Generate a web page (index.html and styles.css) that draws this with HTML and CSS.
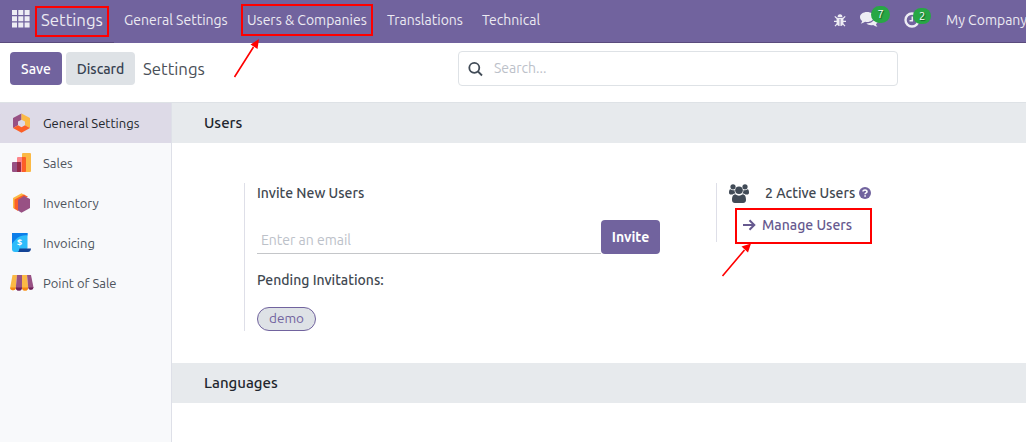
FILE: index.html
```html
<!DOCTYPE html>
<html lang="en">
<head>
<meta charset="utf-8">
<title>Settings</title>
<link rel="stylesheet" href="styles.css">
</head>
<body>
<header class="navbar">
  <svg class="apps" width="18" height="18" viewBox="0 0 18 18"><path d="M0 0h5v5H0zM6.300 0h5v5h-5zM12.600 0h5v5h-5zM0 6.200h5v5H0zM6.300 6.200h5v5h-5zM12.600 6.200h5v5h-5zM0 12.400h5v5H0zM6.300 12.400h5v5h-5zM12.600 12.400h5v5h-5z"/></svg>
  <span class="brand">Settings</span>
  <nav class="menu">
    <a class="m-general">General Settings</a>
    <a class="m-users">Users &amp; Companies</a>
    <a class="m-trans">Translations</a>
    <a class="m-tech">Technical</a>
  </nav>
  <div class="systray">
    <svg class="bug" width="12" height="13" viewBox="0 0 12 13"><path d="M3.600 2.900a2.400 2.600 0 0 1 4.800 0z"/><path d="M2.600 3.700h6.800v5c0 2.200-1.500 3.400-3.400 3.400S2.600 10.900 2.600 8.700z"/><path class="legs" d="M.8 2.300 3 4.500M11.200 2.300 9 4.500M0 7.300h3M12 7.300H9M1 12.200l2.300-2.500M11 12.200 8.700 9.700"/><path class="seam" d="M6 5v7"/></svg>
    <span class="tray-item chat"><svg width="18" height="16" viewBox="0 0 18 16"><path d="M7 0c4 0 7 2.200 7 5s-3 5-7 5c-.7 0-1.300 0-1.900-.2C4 10.700 2.500 11.300.8 11.400c.8-.8 1.300-1.600 1.400-2.500C.8 8 0 6.600 0 5c0-2.800 3-5 7-5z"/><path d="M15 4.500c1.800.8 3 2.200 3 3.900 0 1.500-.8 2.800-2.100 3.700.1.900.6 1.700 1.500 2.500-1.800-.1-3.200-.7-4.300-1.600-2.500.5-5.100 0-6.700-1.500C11 11.500 15.200 8.700 15 4.500z"/></svg><b class="badge">7</b></span>
    <span class="tray-item clock"><svg width="16" height="16" viewBox="0 0 16 16"><circle cx="8" cy="8" r="6.500"/><path d="M8.300 4.500v4.200H5.500"/></svg><b class="badge">2</b></span>
    <span class="company">My Company</span>
  </div>
</header>
<section class="control">
  <button class="btn save">Save</button>
  <button class="btn discard">Discard</button>
  <span class="crumb">Settings</span>
  <div class="search">
    <svg width="16" height="16" viewBox="0 0 16 16"><circle cx="6.300" cy="6.800" r="5"/><path d="m10 10.500 4 4"/></svg>
    <span>Search...</span>
  </div>
</section>
<div class="body">
  <aside class="sidebar">
    <a class="tab active"><svg width="24" height="24" viewBox="0 0 24 24"><path fill="#985184" d="M11.500 2.500v6.200L8 10.500v3.700L3 17V7z"/><path fill="#fbb945" d="M11.500 2.500v6.200l3.500 1.800v3.700l5 2.800V7z"/><path fill="#fc5f27" d="M3 17l5-2.800 3.500 2 3.500-2 5 2.800-8.500 4.800z"/></svg><span>General Settings</span></a>
    <a class="tab"><svg width="24" height="24" viewBox="0 0 24 24"><rect x="12" y="2" width="9" height="19" rx="1" fill="#fbb945"/><rect x="7" y="6" width="9" height="15" rx="1" fill="#fc868b"/><path fill="#fc5f27" d="M12 6h3a1 1 0 0 1 1 1v13a1 1 0 0 1-1 1h-3z"/><rect x="2" y="11" width="9" height="10" rx="1" fill="#985184"/><path fill="#962b48" d="M7 11h3a1 1 0 0 1 1 1v8a1 1 0 0 1-1 1H7z"/></svg><span>Sales</span></a>
    <a class="tab"><svg width="24" height="24" viewBox="0 0 24 24"><path fill="#fbb945" d="m11.500 2.200 3.500 2L5.500 9v9.500L3 17V7z"/><path fill="#fc5f27" d="m14 3.500 4 2.300L8 10.500v9.400l-3.500-2.100V8.500z"/><path fill="#985184" d="m14 5 6 3v9l-8.500 4.800L8 19.600V8.700z"/></svg><span>Inventory</span></a>
    <a class="tab"><svg width="24" height="24" viewBox="0 0 24 24"><path fill="#2ebcfa" d="M3 2h14.500v15.500L9 21H5a3 3 0 0 1-3-3V2z"/><path fill="#0c7ee9" d="M2 2h15.500v2.500C10 3.500 5.500 8 2 13z"/><path fill="#144496" d="M9.500 17.500H21c-.2 2-1 3.500-3 3.500H7.500c1.500-.4 1.500-2 2-3.500z"/><text x="9.600" y="15" text-anchor="middle" class="dollar">$</text></svg><span>Invoicing</span></a>
    <a class="tab"><svg width="24" height="24" viewBox="0 0 24 24"><path fill="#fbb945" d="M2.500 4H7L5.800 16.500a2.800 2.800 0 0 1-5.600 0z"/><path fill="#985184" d="M7 4h5v12.500a3 3 0 0 1-6.200 0z"/><path fill="#fbb945" d="M12 4h5l1.200 12.500a3 3 0 0 1-6.200 0z"/><path fill="#985184" d="M17 4h4l2.500 12.500a2.700 2.700 0 0 1-5.300 0z"/><path fill="#f78613" d="M.2 16.500h5.600a2.800 2.800 0 0 1-5.600 0zM12 16.500h6.200a3.100 3.100 0 0 1-6.200 0z"/><path fill="#6d2059" d="M5.800 16.500H12a3.100 3.100 0 0 1-6.200 0zM18.200 16.500h5.300a2.700 2.700 0 0 1-5.300 0z"/></svg><span>Point of Sale</span></a>
  </aside>
  <main class="main">
    <h2>Users</h2>
    <div class="settings">
      <section class="box invite-box">
        <div class="label">Invite New Users</div>
        <div class="invite-row"><span class="input">Enter an email</span><button class="btn invite">Invite</button></div>
        <div class="label">Pending Invitations:</div>
        <span class="tag">demo</span>
      </section>
      <section class="box active-box">
        <div class="active-row">
          <svg class="people" width="20" height="19" viewBox="0 0 20 19"><circle cx="4" cy="2.800" r="2.600"/><circle cx="16" cy="2.800" r="2.600"/><path d="M1.500 5.300C3 6.500 4.500 6.300 5.500 6c0 1.500.4 2.500 1 3.500-1.200 0-2.200.3-2.900 1.100H2C.7 10.600 0 10 0 8.800c0-1.500.3-3.500 1.500-3.500zM18.500 5.300C17 6.500 15.500 6.300 14.500 6c0 1.500-.4 2.500-1 3.500 1.200 0 2.200.3 2.900 1.100H18c1.300 0 2-.6 2-1.800 0-1.500-.3-3.500-1.500-3.500z"/><circle cx="10" cy="6.300" r="3.800"/><path d="M6.300 10.300c2.300 1.900 5.100 1.900 7.400 0 2.800.2 3.300 3.300 3.300 5.700 0 1.900-1.200 2.900-2.900 2.900H5.900C4.200 18.900 3 17.900 3 16c0-2.400.5-5.500 3.300-5.700z"/></svg>
          <span class="label l-active">2 Active Users</span>
          <svg class="help" width="12" height="12" viewBox="0 0 12 12"><circle cx="6" cy="6" r="6"/><path d="M4 4.600C4 2.400 8 2.400 8 4.700 8 6 6.100 5.900 6.100 7.300M6.100 8.300v1.500"/></svg>
        </div>
        <div class="manage">
          <svg width="13" height="12" viewBox="0 0 13 12"><path d="M0 6h11M6.500 1.200 11.300 6l-4.800 4.800"/></svg>
          <span>Manage Users</span>
        </div>
      </section>
    </div>
    <h2>Languages</h2>
  </main>
</div>
<svg class="marks" width="1026" height="442" viewBox="0 0 1026 442">
  <g fill="none" stroke="#f00" stroke-width="2"><path d="M36 7h72v29H36zM242 5h130v30H242zM736 209h135v34H736z"/><path stroke-width="1.600" d="m234.500 77 19-30M722.500 276l22-26"/></g>
  <path fill="#f00" d="m259 39-1.500 10-7-4.500zM751 243.500l-3 9-6.500-6z"/>
</svg>
</body>
</html>
```
FILE: styles.css
```css
* { box-sizing: border-box; }
body {
  margin: 0;
  width: 1026px;
  height: 442px;
  overflow: hidden;
  position: relative;
  background: #fff;
  color: #374151;
  font: 14px/20px Ubuntu, "Noto Sans", sans-serif;
  white-space: nowrap;
}
svg { display: block; flex: none; }
.navbar {
  display: flex;
  align-items: center;
  height: 43px;
  padding-left: 12px;
  padding-bottom: 3px;
  background: linear-gradient(90deg, #5a4b7d 114px, #71639e 114px 550px, #5a4b7d 550px) bottom / 100% 1px no-repeat #71639e;
  color: #eceaf2;
  overflow: hidden;
}
.apps { fill: #eeedf4; margin-top: -2px; }
.brand { flex: none; width: 83px; margin-left: 11px; font-size: 16.8px; }
.menu { display: flex; flex: none; }
.m-general { width: 123px; }
.m-users { width: 140px; }
.m-trans { width: 95px; }
.m-tech { width: 60px; }
.systray { display: flex; flex: none; align-items: center; margin-left: 292px; fill: #eeedf4; }
.bug { margin-right: 14px; }
.legs { stroke: #eeedf4; stroke-width: 1.2; fill: none; }
.seam { stroke: #71639e; stroke-width: .8; }
.tray-item { position: relative; }
.chat { width: 44px; }
.clock { width: 42px; }
.clock svg { fill: none; stroke: #eeedf4; stroke-width: 2.4; }
.clock path { stroke-width: 1.5; }
.badge {
  position: absolute;
  left: 11px;
  top: -6px;
  width: 19px;
  height: 17px;
  border-radius: 9px;
  background: #28a745;
  color: #fff;
  font: 11px/17px Ubuntu, "Noto Sans", sans-serif;
  text-align: center;
  text-shadow: 1px 1px 1px #145523;
}
.clock .badge { left: 9px; width: 18px; height: 16px; line-height: 16px; top: -4px; }
.control {
  display: flex;
  align-items: center;
  height: 60px;
  padding: 0 0 8px 10px;
  border-bottom: 1px solid #dee2e6;
}
.btn {
  height: 33px;
  padding: 0;
  border: 0;
  border-radius: 4px;
  background: #71639e;
  color: #fff;
  font: 500 14px/32px Ubuntu, "Noto Sans", sans-serif;
}
.save { width: 52px; margin-right: 4px; }
.discard { width: 69px; background: #dee2e6; color: #374151; }
.crumb { width: 323px; padding-left: 8px; font-size: 16.8px; color: #4a5058; }
.search {
  display: flex;
  align-items: center;
  width: 440px;
  height: 35px;
  padding-left: 9px;
  gap: 10px;
  border: 1px solid #dee2e6;
  border-radius: 4px;
  color: #bcc1c9;
}
.search svg { fill: none; stroke: #414b57; stroke-width: 1.8; }
.search span { margin-top: -2px; }
.body { display: flex; height: 339px; }
.sidebar { width: 172px; border-right: 1px solid #dee0e8; background: #f8f9fb; }
.tab {
  display: flex;
  align-items: center;
  gap: 9px;
  height: 40px;
  padding-left: 10px;
  color: #4d535c;
  font-size: 13px;
}
.active { background: #dddae7; color: #22262d; }
.dollar { fill: #fff; font: bold 9px "Noto Sans", sans-serif; }
.main { flex: 1; }
h2 {
  height: 40px;
  margin: 0;
  padding-left: 32px;
  background: #e7eaed;
  color: #22262d;
  font: 500 15px/40px Ubuntu, "Noto Sans", sans-serif;
}
.settings { display: flex; align-items: flex-start; padding: 40px 0 32px 72px; }
.box { padding-left: 12px; border-left: 1px solid #dedfe8; }
.invite-box { width: 472px; height: 148px; }
.label { font-weight: 500; color: #414851; }
.invite-row { display: flex; margin: 17px 0 16px; }
.input { width: 344px; height: 34px; padding: 10px 0 0 4px; border-bottom: 1px solid #c4c6c9; color: #bcc1c9; }
.invite { width: 59px; height: 34px; font-weight: 700; }
.tag {
  display: block;
  width: 59px;
  height: 24px;
  margin-top: 17px;
  border: 1px solid #71639e;
  border-radius: 12px;
  background: #dee2e6;
  color: #71639e;
  font-size: 13.5px;
  line-height: 21px;
  text-align: center;
}
.active-box { height: 59px; }
.active-row { display: flex; align-items: center; height: 20px; }
.l-active { width: 94px; margin-left: 16px; }
.people { fill: #414b57; }
.help { fill: #71639e; }
.help path { fill: none; stroke: #fff; stroke-width: 1.6; }
.manage { display: flex; align-items: center; gap: 6px; height: 34px; margin-top: 5px; padding-left: 14px; color: #66598f; font-weight: 500; }
.manage svg { fill: none; stroke: #66598f; stroke-width: 2; }
.marks { position: absolute; left: 0; top: 0; }
```
